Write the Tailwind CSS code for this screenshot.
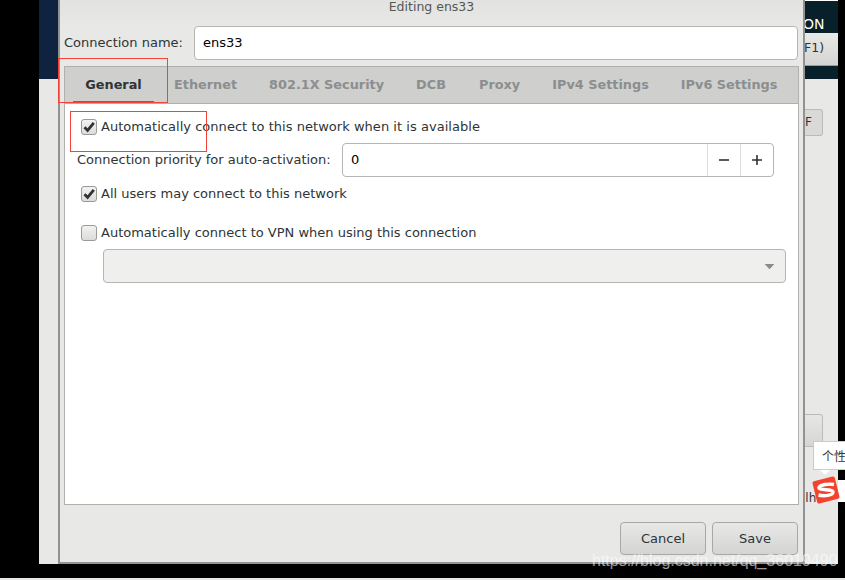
<!DOCTYPE html>
<html lang="en">
<head>
  <meta charset="UTF-8"/>
  <title>Editing ens33</title>
  <script src="https://cdn.jsdelivr.net/npm/@tailwindcss/browser@4"></script>
</head>
<body class="bg-black overflow-hidden font-['DejaVu_Sans',sans-serif] text-[13px] text-[#2e3436]">
  <div class="relative w-[845px] h-[580px] bg-black">

    <!-- installer screen behind the dialog -->
    <div class="absolute left-[39px] top-0 w-[799px] h-[564px] bg-[#e8e8e7]">
      <div class="h-[79px] flex bg-[#0f2340]">
        <div class="ml-auto w-[33px] h-[79px] bg-[#08202a] flex flex-col">
          <div class="h-[33px] pt-[14px] -ml-[2px] text-white text-[14px] leading-[18px] border-t border-t-white">ON</div>
          <div class="h-[33px] bg-gradient-to-b from-[#e9e9e8] to-[#d4d4d2] border-b border-[#999] text-[12.5px] leading-[30px] -indent-[1px]">F1)</div>
        </div>
      </div>
      <div class="absolute left-[766px] top-[109px] w-[18px] h-[27px] bg-[#d9d9d7] border border-[#bbb] border-l-0 rounded-r-[3px] text-[12px] leading-[24px]">F</div>
      <div class="absolute left-[766px] top-[414px] w-[18px] h-[33px] bg-gradient-to-b from-[#e6e6e5] to-[#d6d6d4] border border-[#bbb] border-l-0 rounded-r-[3px]"></div>
      <div class="absolute left-[759px] top-[490px] text-[12px] leading-[16px]">alh</div>
    </div>
    <div class="absolute left-[838px] top-[480px] w-[7px] h-[22px] bg-white"></div>
    <div class="absolute left-0 top-[578px] w-[845px] h-[2px] bg-[#e8e8e7]"></div>

    <!-- dialog window -->
    <div class="absolute left-[58px] top-0 w-[747px] h-[564px] bg-[#e8e8e7] border-x-2 border-b-2 border-[#929292] flex flex-col">
      <div class="h-[26px] shrink-0 bg-gradient-to-b from-[#e2e2e1] to-[#e8e8e7] text-center text-[12.5px] leading-[13px] text-[#555753]">Editing ens33</div>
      <div class="h-[34px] shrink-0 flex items-center pl-[4px] pr-[5px]">
        <span class="w-[130px] shrink-0 text-[13px]">Connection name:</span>
        <div class="flex-1 h-[34px] bg-white border border-[#b5b5b3] rounded-[4px] pl-[8px] leading-[31px] text-[13px] text-black">ens33</div>
      </div>

      <div class="mt-[6px] ml-[4px] mr-[4px] h-[439px] flex flex-col border border-[#b0b0ae] bg-white">
        <div class="h-[37px] shrink-0 flex bg-[#cfcfcd] border-b border-[#b0b0ae] font-bold text-[12.85px] leading-[35px] text-[#8b8e8f]">
          <div class="w-[81px] ml-[8px] text-center text-[#2e3436] border-b-2 border-[#4a6fa5] h-[36px] -mb-px">General</div>
          <div class="ml-[20px]">Ethernet</div>
          <div class="ml-[32px]">802.1X Security</div>
          <div class="ml-[32px]">DCB</div>
          <div class="ml-[33px]">Proxy</div>
          <div class="ml-[32px]">IPv4 Settings</div>
          <div class="ml-[32px]">IPv6 Settings</div>
        </div>

        <div class="flex-1 flex flex-col pl-[12px] pr-[12px]">
          <label class="mt-[14px] ml-[4px] flex items-center h-[18px] gap-[4px] tracking-[0.035px]">
            <span class="w-[16px] h-[16px] rounded-[3px] border border-[#9a9a98] bg-gradient-to-b from-[#f2f2f1] to-[#dcdcda] flex items-center justify-center">
              <svg viewBox="0 0 14 14" class="w-[14px] h-[14px]"><path d="M2.5 7.3 L5.6 10.5 L11.8 2.8" fill="none" stroke="#2e3436" stroke-width="2.8"/></svg>
            </span>
            Automatically connect to this network when it is available
          </label>
          <div class="mt-[7px] flex items-center h-[34px]">
            <span class="w-[265px] shrink-0">Connection priority for auto-activation:</span>
            <div class="w-[432px] h-[34px] bg-white border border-[#b5b5b3] rounded-[4px] flex text-black">
              <span class="flex-1 pl-[8px] leading-[31px]">0</span>
              <span class="w-[33px] border-l border-[#dcdcda] flex items-center justify-center">
                <svg viewBox="0 0 12 12" class="w-[12px] h-[12px]"><path d="M1 6 H11" stroke="#2e3436" stroke-width="1.6"/></svg>
              </span>
              <span class="w-[33px] border-l border-[#dcdcda] flex items-center justify-center">
                <svg viewBox="0 0 12 12" class="w-[12px] h-[12px]"><path d="M1 6 H11 M6 1 V11" stroke="#2e3436" stroke-width="1.6"/></svg>
              </span>
            </div>
          </div>
          <label class="mt-[8px] ml-[4px] flex items-center h-[18px] gap-[4px]">
            <span class="w-[16px] h-[16px] rounded-[3px] border border-[#9a9a98] bg-gradient-to-b from-[#f2f2f1] to-[#dcdcda] flex items-center justify-center">
              <svg viewBox="0 0 14 14" class="w-[14px] h-[14px]"><path d="M2.5 7.3 L5.6 10.5 L11.8 2.8" fill="none" stroke="#2e3436" stroke-width="2.8"/></svg>
            </span>
            All users may connect to this network
          </label>
          <label class="mt-[21px] ml-[4px] flex items-center h-[18px] gap-[4px]">
            <span class="w-[16px] h-[16px] rounded-[3px] border border-[#9a9a98] bg-gradient-to-b from-[#f2f2f1] to-[#dcdcda]"></span>
            Automatically connect to VPN when using this connection
          </label>
          <div class="mt-[7px] ml-[26px] w-[683px] h-[34px] bg-[#efefee] border border-[#b5b5b3] rounded-[4px] flex items-center justify-end pr-[10px]">
            <svg viewBox="0 0 12 8" class="w-[11px] h-[7px]"><path d="M0.5 1 H11.5 L6 7 Z" fill="#8a8a88"/></svg>
          </div>
        </div>
      </div>

      <div class="mt-[17px] flex justify-end gap-[6px] pr-[5px]">
        <button class="w-[86px] h-[33px] rounded-[4px] border border-[#a8a8a6] bg-gradient-to-b from-[#e8e8e7] to-[#d4d4d2] text-[13px]">Cancel</button>
        <button class="w-[86px] h-[33px] rounded-[4px] border border-[#a8a8a6] bg-gradient-to-b from-[#e8e8e7] to-[#d4d4d2] text-[13px]">Save</button>
      </div>
    </div>

    <!-- red annotation boxes -->
    <div class="absolute left-[58px] top-[58px] w-[110px] h-[45px] border border-[#f44336]"></div>
    <div class="absolute left-[70px] top-[111px] w-[137px] h-[41px] border border-[#f44336]"></div>

    <!-- input method tooltip and logo -->
    <div class="absolute left-[813px] top-[441px] w-[40px] h-[29px] bg-white border border-[#ccc] pl-[8px] leading-[27px] text-[12px] font-['Noto_Sans_CJK_SC',sans-serif] text-[#333]">个性</div>
    <div class="absolute left-[820px] top-[470px] w-0 h-0 border-x-[5px] border-x-transparent border-t-[5px] border-t-white"></div>
    <svg viewBox="0 0 28 28" class="absolute left-[812px] top-[476px] w-[28px] h-[28px]">
      <rect x="2.5" y="2.5" width="23" height="23" rx="2" fill="#f4432c" transform="rotate(-14 14 14)"/>
      <path d="M22 8.5 C17 7.5 8 8.5 7 11.5 C6.5 15 21 12.5 21 16 C21 19.5 12 20.5 6.5 19" fill="none" stroke="#fff" stroke-width="3.4"/>
    </svg>

    <!-- watermark -->
    <div class="absolute left-[592px] top-[551px] text-[16px] leading-[20px] font-['Liberation_Sans',sans-serif] text-white/60">https://blog.csdn.net/qq_36019490</div>
  </div>
</body>
</html>
